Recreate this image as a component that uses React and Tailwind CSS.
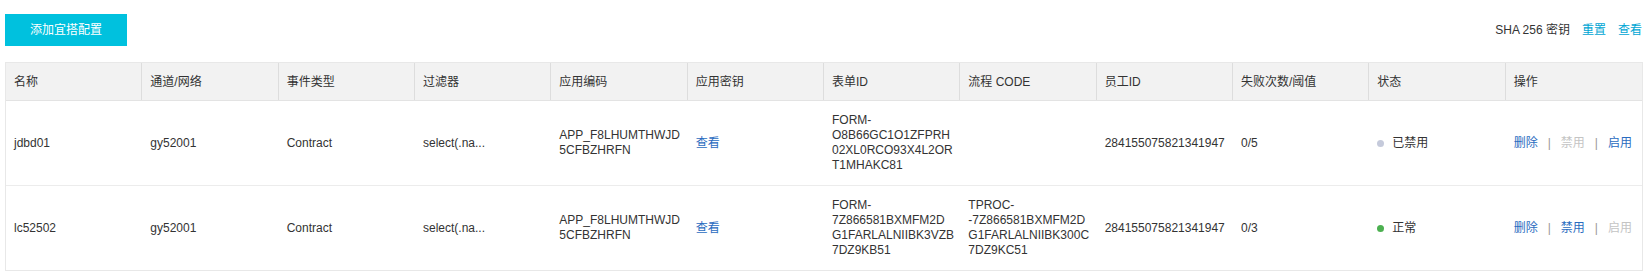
import React from "react";

const columns = [
  "名称",
  "通道/网络",
  "事件类型",
  "过滤器",
  "应用编码",
  "应用密钥",
  "表单ID",
  "流程 CODE",
  "员工ID",
  "失败次数/阈值",
  "状态",
  "操作",
];

const rows = [
  {
    name: "jdbd01",
    channel: "gy52001",
    event: "Contract",
    filter: "select(.na...",
    appCode: ["APP_F8LHUMTHWJD", "5CFBZHRFN"],
    formId: ["FORM-", "O8B66GC1O1ZFPRH", "02XL0RCO93X4L2OR", "T1MHAKC81"],
    procCode: [],
    staffId: "284155075821341947",
    fails: "0/5",
    enabled: false,
  },
  {
    name: "lc52502",
    channel: "gy52001",
    event: "Contract",
    filter: "select(.na...",
    appCode: ["APP_F8LHUMTHWJD", "5CFBZHRFN"],
    formId: ["FORM-", "7Z866581BXMFM2D", "G1FARLALNIIBK3VZB", "7DZ9KB51"],
    procCode: ["TPROC-", "-7Z866581BXMFM2D", "G1FARLALNIIBK300C", "7DZ9KC51"],
    staffId: "284155075821341947",
    fails: "0/3",
    enabled: true,
  },
];

function Lines({ lines }) {
  return (
    <div className="leading-[15px]">
      {lines.map((l, i) => (
        <div key={i} className="whitespace-nowrap">
          {l}
        </div>
      ))}
    </div>
  );
}

function Cell({ children }) {
  return (
    <div className="flex items-center px-2 py-3 min-w-0">{children}</div>
  );
}

function Action({ label, active }) {
  return active ? (
    <a className="text-[#2a6cc0] cursor-pointer">{label}</a>
  ) : (
    <span className="text-[#c4c4c4]">{label}</span>
  );
}

export default function App() {
  return (
    <div
      className="bg-white pl-[5px] pr-[8px] pt-[14px] text-[12px] text-[#333]"
      style={{ fontFamily: '"Liberation Sans", "Noto Sans CJK SC", sans-serif' }}
    >
      {/* TOOLBAR */}
      <div className="flex items-center justify-between mb-[16px]">
        <button className="h-[32px] w-[122px] bg-[#00c1de] text-white text-[12px]">
          添加宜搭配置
        </button>
        <div className="flex items-center gap-[12px] pr-px">
          <span>SHA 256 密钥</span>
          <a className="text-[#00a6d4] cursor-pointer">重置</a>
          <a className="text-[#00a6d4] cursor-pointer">查看</a>
        </div>
      </div>

      {/* TABLE */}
      <div className="border border-[#e8e8e8]">
        <div className="grid grid-cols-12 bg-[#f2f2f2] border-b border-[#e3e3e3]">
          {columns.map((c, i) => (
            <div
              key={c}
              className={`h-[37px] flex items-center px-2 ${
                i < columns.length - 1 ? "border-r border-[#dddddd]" : ""
              }`}
            >
              {c}
            </div>
          ))}
        </div>

        {rows.map((r, idx) => (
          <div
            key={r.name}
            className={`grid grid-cols-12 min-h-[84px] ${
              idx < rows.length - 1 ? "border-b border-[#ececec]" : ""
            }`}
          >
            <Cell>{r.name}</Cell>
            <Cell>{r.channel}</Cell>
            <Cell>{r.event}</Cell>
            <Cell>{r.filter}</Cell>
            <Cell>
              <Lines lines={r.appCode} />
            </Cell>
            <Cell>
              <a className="text-[#2a6cc0] cursor-pointer">查看</a>
            </Cell>
            <Cell>
              <Lines lines={r.formId} />
            </Cell>
            <Cell>
              <Lines lines={r.procCode} />
            </Cell>
            <Cell>
              <span className="whitespace-nowrap">{r.staffId}</span>
            </Cell>
            <Cell>{r.fails}</Cell>
            <Cell>
              <span
                className={`w-[7px] h-[7px] rounded-full mr-[8px] ${
                  r.enabled ? "bg-[#4cb050]" : "bg-[#c5cadb]"
                }`}
              />
              {r.enabled ? "正常" : "已禁用"}
            </Cell>
            <Cell>
              <Action label="删除" active />
              <span className="mx-[10px] text-[#999]">|</span>
              <Action label="禁用" active={r.enabled} />
              <span className="mx-[10px] text-[#999]">|</span>
              <Action label="启用" active={!r.enabled} />
            </Cell>
          </div>
        ))}
      </div>
    </div>
  );
}
